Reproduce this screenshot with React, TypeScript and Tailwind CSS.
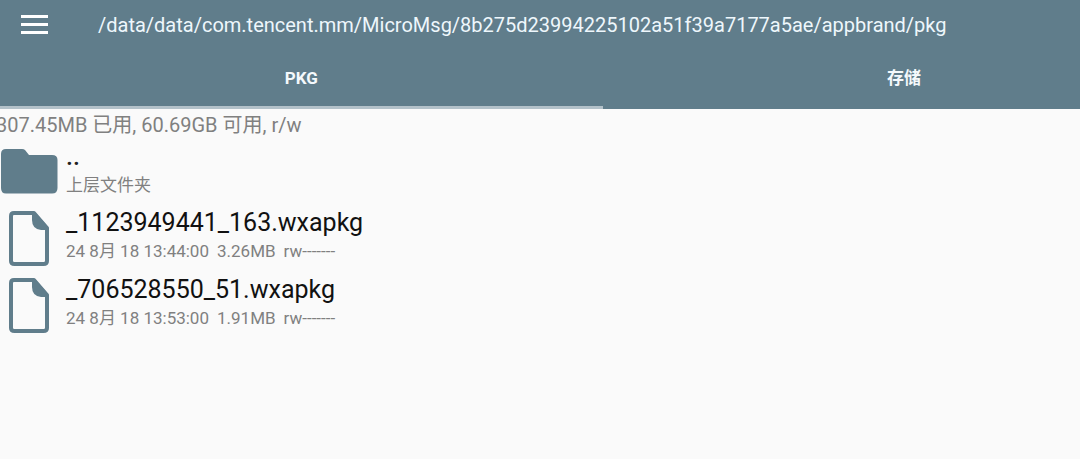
const files = [
  { name: "_1123949441_163.wxapkg", date: "24 8月 18 13:44:00", size: "3.26MB", mode: "rw-------" },
  { name: "_706528550_51.wxapkg", date: "24 8月 18 13:53:00", size: "1.91MB", mode: "rw-------" },
];

function FolderIcon() {
  return (
    <svg viewBox="0 0 58 46" className="h-[46px] w-[58px] shrink-0" fill="#607d8b" aria-hidden="true">
      <path d="M6 1H22Q24 1 25 2L29 7H52Q57.500 7 57.500 12V40Q57.500 45.500 52 45.500H6Q1 45.500 1 40V6Q1 1 6 1Z" />
    </svg>
  );
}

function FileIcon() {
  return (
    <svg viewBox="0 0 40 56" className="h-14 w-10 shrink-0" fill="none" aria-hidden="true">
      <path d="M5 2H25L38 17V50Q38 53 34.500 53H5.500Q2 53 2 50V5Q2 2 5 2Z" stroke="#607d8b" strokeWidth="4" strokeLinejoin="round" />
      <path d="M23 1H26L39 16V19H32Q23 18 23 9Z" fill="#607d8b" />
    </svg>
  );
}

export default function App() {
  return (
    <div className="min-h-screen overflow-hidden bg-[#fafafa] font-[Roboto,'Noto_Sans_CJK_SC',sans-serif] text-[#808080]">
      <header className="bg-[#607d8b] text-white">
        <div className="flex h-12 items-center gap-12 pl-[21px]">
          <button type="button" aria-label="Menu" className="shrink-0">
            <svg viewBox="0 0 27 19" className="h-[19px] w-[27px]" fill="currentColor" aria-hidden="true">
              <path d="M0 0H27V3H0ZM0 8H27V11H0ZM0 16H27V19H0Z" />
            </svg>
          </button>
          <h1 className="pt-0.5 pl-0.5 text-xl whitespace-nowrap text-[#eef7fc]">
            /data/data/com.tencent.mm/MicroMsg/8b275d23994225102a51f39a7177a5ae/appbrand/pkg
          </h1>
        </div>
        <nav className="flex h-[61px] text-[17px] font-bold text-[#f4f9fc]">
          <button type="button" className="w-[55.8%] shrink-0 border-b-3 border-[#b3c1c9] pt-1">PKG</button>
          <button type="button" className="w-[55.8%] shrink-0 border-b-3 border-transparent pt-1">存储</button>
        </nav>
      </header>
      <main>
        <p className="-ml-1 h-8 text-xl leading-8 whitespace-nowrap">307.45MB 已用, 60.69GB 可用, r/w</p>
        <ul>
          <li className="flex h-[66px] gap-2">
            <div className="pt-[7px]">
              <FolderIcon />
            </div>
            <div>
              <h2 className="text-[25px] leading-8 font-medium text-[#212121]">..</h2>
              <p className="text-[17px] leading-6">上层文件夹</p>
            </div>
          </li>
          {files.map((file) => (
            <li key={file.name} className="flex h-[67px] gap-[17px] pl-[9px]">
              <div className="pt-1">
                <FileIcon />
              </div>
              <div>
                <h2 className="text-[25px] leading-8 text-[#111111]">{file.name}</h2>
                <p className="flex gap-2 text-[17px] leading-6 whitespace-nowrap">
                  <span>{file.date}</span>
                  <span>{file.size}</span>
                  <span>{file.mode}</span>
                </p>
              </div>
            </li>
          ))}
        </ul>
      </main>
    </div>
  );
}
